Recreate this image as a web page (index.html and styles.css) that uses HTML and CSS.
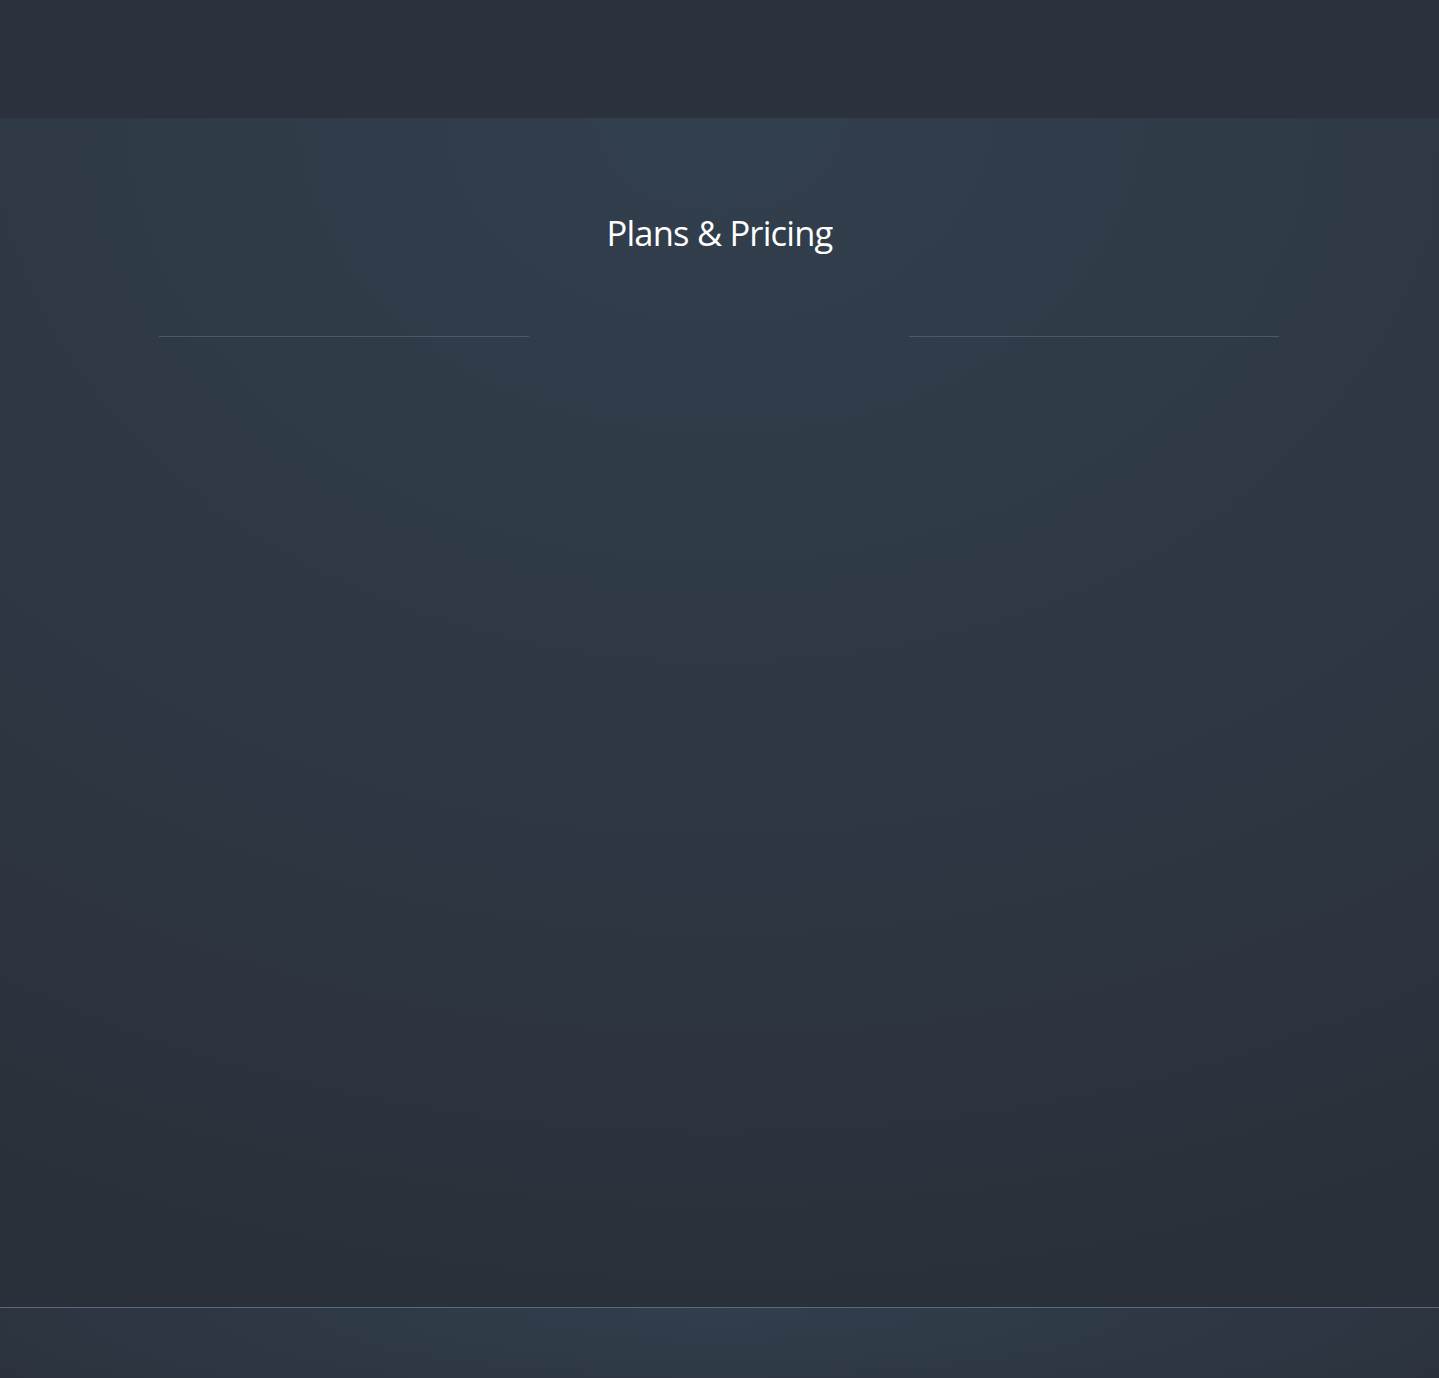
FILE: index.html
```html
<!DOCTYPE html>
<html lang="en">
<head>
<meta charset="utf-8">
<title>Plans &amp; Pricing</title>
<link rel="stylesheet" href="styles.css">
</head>
<body>
<header class="topbar"></header>
<main class="pricing">
  <h1 class="pricing-title">Plans &amp; Pricing</h1>
  <div class="plans">
    <div class="plan plan-side"></div>
    <div class="plan plan-featured"></div>
    <div class="plan plan-side"></div>
  </div>
</main>
<footer class="footer"></footer>
</body>
</html>
```
FILE: styles.css
```css
html, body {
  margin: 0;
  padding: 0;
}
body {
  background: #2b303b;
  font-family: "Open Sans", "Noto Sans", sans-serif;
  min-height: 1378px;
}
.topbar {
  height: 118px;
  background: #2b313d;
}
.pricing {
  height: 1189px;
  box-sizing: border-box;
  padding-top: 93px;
  background: radial-gradient(ellipse 110% 100% at 50% 0%, #323f4d 0%, #2f3946 45%, #2c333e 85%, #293039 100%);
}
.pricing-title {
  margin: 0;
  text-align: center;
  color: #ffffff;
  font-weight: 400;
  font-size: 34.5px;
  line-height: 44px;
  letter-spacing: -0.8px;
}
.plans {
  margin-top: 81px;
  display: grid;
  grid-template-columns: 370px 380px 370px;
  justify-content: center;
  padding-right: 1px;
}
.plan {
  height: 400px;
}
.plan-side {
  border-top: 1px solid #4a5a6d;
}
.footer {
  height: 71px;
  border-top: 1px solid #5b6979;
  background: radial-gradient(ellipse 60% 200% at 50% 0%, #323e4c 0%, #2e3845 55%, #2b323d 100%);
}
```
